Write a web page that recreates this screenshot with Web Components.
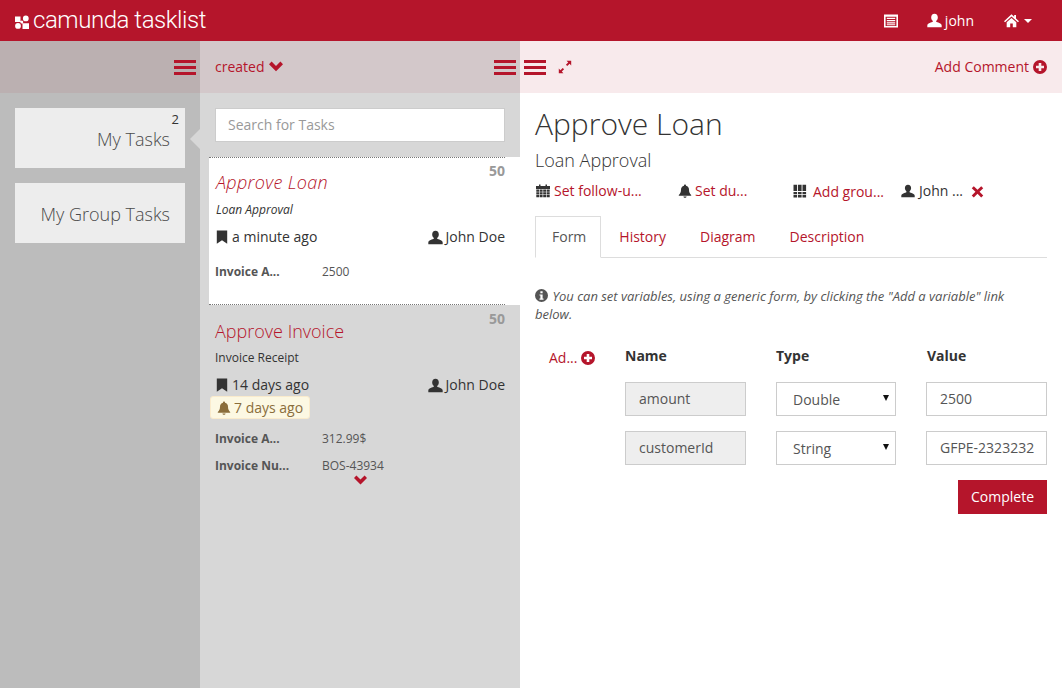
<!DOCTYPE html>
<html lang="en">
<head>
<meta charset="utf-8">
<title>camunda tasklist</title>
<style>
  html, body { margin: 0; height: 100%; overflow: hidden; }
  body { font: 14px/20px "Open Sans", "Liberation Sans", sans-serif; color: #333; }
</style>
</head>
<body>
<cam-app></cam-app>

<script>
const ICONS = {
  user: '<path d="M7 .8C5 .8 3.9 2.3 3.9 4.1c0 1.3.6 2.5 1.4 3.2.3.4.2 1-.3 1.2C3 9.2.3 9.9.3 11.6v1.6h13.4v-1.6c0-1.7-2.700-2.400-4.700-3.100-.5-.2-.6-.8-.3-1.200.8-.7 1.400-1.900 1.400-3.200C10.100 2.300 9 .8 7 .8z"/>',
  home: '<path d="M7 1.200 0 7.600l1 1L7 3.300l6 5.300 1-1-2.800-2.500V1.800H9.500v1.800zM2.500 8.700V13.300h3.300V9.800h2.400v3.500h3.300V8.700L7 4.700z"/>',
  listalt: '<path fill-rule="evenodd" d="M0 .5h14v13H0zM1.600 2.800v9.100h10.800V2.800zM2.800 3.800h8.400v1.200H2.800zM2.800 6h8.400v1.200H2.800zM2.800 8.200h8.400v1.200H2.800zM2.800 10.200h8.400v1H2.800z"/>',
  bookmark: '<path d="M1.800 .6h10.400v13.200L7 10.200l-5.200 3.600z"/>',
  bell: '<path d="M7 .4c-.6 0-1 .4-1 1v.4C4 2.300 3 3.800 3 5.800c0 2.600-.8 3.900-2.200 5.200v.8h12.400V11C11.800 9.700 11 8.400 11 5.800c0-2-1-3.500-3-4v-.4c0-.6-.4-1-1-1zM5.400 12.400C5.500 13.300 6.200 13.800 7 13.800s1.500-.5 1.600-1.400z"/>',
  calendar: '<path d="M3 .5h1.500V2h5V.5H11V2h3v3H0V2h3zM.3 5.600h2.900v2.100H.3zM3.800 5.600h2.800v2.100H3.800zM7.200 5.600H10v2.100H7.200zM10.600 5.600h3.100v2.100h-3.100zM.3 8.200h2.900v2.100H.3zM3.800 8.200h2.800v2.100H3.800zM7.200 8.200H10v2.100H7.200zM10.600 8.200h3.100v2.100h-3.100zM.3 10.800h2.900v2.400H.3zM3.800 10.800h2.800v2.400H3.800zM7.200 10.800H10v2.400H7.200zM10.600 10.800h3.100v2.400h-3.100z"/>',
  th: '<path d="M.5 .8h3.600v6.200H.5zM5 .8h3.600v6.200H5zM9.500 .8h3.600v6.200H9.500zM.5 7.900h3.600v2.300H.5zM5 7.900h3.600v2.300H5zM9.500 7.900h3.600v2.300H9.500zM.5 11h3.600v2.600H.5zM5 11h3.600v2.600H5zM9.500 11h3.600v2.600H9.500z"/>',
  remove: '<path d="M3 1.300 7 5.200l4-3.900L13.200 3.500 9.200 7.400l4 4L11 13.500l-4-4-4 4L.8 11.400l4-4-4-3.900z"/>',
  plus: '<path fill-rule="evenodd" d="M7 0a7 7 0 1 1 0 14A7 7 0 0 1 7 0zM5.700 3v2.700H3v2.600h2.700V11h2.600V8.300H11V5.700H8.300V3z"/>',
  info: '<path fill-rule="evenodd" d="M7 0a7 7 0 1 1 0 14A7 7 0 0 1 7 0zM5.800 2.400v2.200h2.400V2.400zM4.800 5.800v1.300h1v3H4.800v1.400h4.400v-1.400h-1V5.800z"/>',
  resize: '<path d="M8.600.8h4.600v4.600l-1.600-1.600-2.300 2.300-1.400-1.400 2.300-2.300zM5.400 13.200H.8V8.600l1.600 1.600 2.300-2.300 1.400 1.400-2.300 2.300z"/>',
  chevron: '<path d="M2.600 1.600 7 6l4.400-4.400L14 4.200l-7 7-7-7z"/>',
  logo: '<path d="M0 1.500h5.500V7H0zM10.800 .5a2.900 2.900 0 1 1 0 5.800 2.900 2.900 0 0 1 0-5.800zM6.800 5.600a1.500 1.500 0 1 1 0 3 1.500 1.500 0 0 1 0-3zM3 8a2.900 2.900 0 1 1 0 5.800A2.900 2.900 0 0 1 3 8zM7.500 8.300H14V14H7.500z"/>'
};

class CamIcon extends HTMLElement {
  connectedCallback() {
    if (this.shadowRoot) return;
    const size = this.getAttribute('size') || 14;
    this.attachShadow({ mode: 'open' }).innerHTML = `
      <style>
        :host { display: inline-flex; flex: none; width: ${size}px; height: ${size}px; }
        svg { display: block; width: 100%; height: 100%; fill: currentColor; }
      </style>
      <svg viewBox="0 0 14 14">${ICONS[this.getAttribute('name')] || ''}</svg>`;
  }
}

class CamMenuToggle extends HTMLElement {
  constructor() {
    super();
    this.attachShadow({ mode: 'open' }).innerHTML = `
      <style>
        :host { display: flex; flex-direction: column; gap: 3px; width: 22px; flex: none; }
        i { display: block; height: 3px; background: #b5152b; }
      </style>
      <i></i><i></i><i></i>`;
  }
}

class CamHeader extends HTMLElement {
  constructor() {
    super();
    this.attachShadow({ mode: 'open' }).innerHTML = `
      <style>
        :host { display: flex; align-items: center; height: 41px; background: #b5152b; color: #fff; }
        .brand { display: flex; align-items: center; margin-left: 15px; }
        .brand cam-icon { margin-top: 2px; }
        .name { margin-left: 4px; font: 300 24px/41px Roboto, "Open Sans", sans-serif; letter-spacing: -.45px; white-space: nowrap; }
        nav { margin-left: auto; display: flex; align-items: center; padding-right: 30px; }
        .item { display: flex; align-items: center; }
        .user { margin-left: 29px; gap: 3px; }
        .home { margin-left: 30px; }
        .caret { margin-left: 5px; width: 0; height: 0; border: 4px solid transparent; border-top-color: #fff; border-bottom: 0; }
      </style>
      <div class="brand">
        <cam-icon name="logo" size="14"></cam-icon>
        <span class="name">camunda tasklist</span>
      </div>
      <nav>
        <cam-icon class="item" name="listalt" size="14"></cam-icon>
        <span class="item user"><cam-icon name="user" size="15"></cam-icon>john</span>
        <span class="item home"><cam-icon name="home" size="15"></cam-icon><span class="caret"></span></span>
      </nav>`;
  }
}

class CamToolbar extends HTMLElement {
  constructor() {
    super();
    this.attachShadow({ mode: 'open' }).innerHTML = `
      <style>
        :host { display: flex; align-items: center; height: 52px; box-sizing: border-box; color: #b5152b; }
      </style>
      <slot></slot>`;
  }
}

class CamFilterCard extends HTMLElement {
  constructor() {
    super();
    this.attachShadow({ mode: 'open' }).innerHTML = `
      <style>
        :host { display: flex; align-items: center; justify-content: flex-end; position: relative; height: 60px;
          box-sizing: border-box; padding: 1px 15px 0; background: #ededed; color: #4a4a4a; font-size: 18px; font-weight: 300; }
        .count { position: absolute; top: 2px; right: 6px; font-size: 13px; font-weight: 400; line-height: 18px; color: #333; }
        .count:empty { display: none; }
      </style>
      <slot></slot><span class="count"></span>`;
  }
  connectedCallback() {
    this.shadowRoot.querySelector('.count').textContent = this.getAttribute('count') || '';
  }
}

class CamTaskCard extends HTMLElement {
  constructor() {
    super();
    this.attachShadow({ mode: 'open' }).innerHTML = `
      <style>
        :host { display: block; position: relative; }
        :host([active]) { background: #fff; }
        .inner { padding: 0 0 0 6px; margin-right: 15px; box-sizing: border-box; }
        :host([active]) .inner { border-top: 1px dotted #777; border-bottom: 1px dotted #777; padding-bottom: 14px; margin-top: -1px; }
        .prio { position: absolute; top: 4px; right: 15px; font-weight: 700; color: #999; line-height: 20px; }
        .title { padding-top: 13px; font-size: 18px; font-weight: 300; line-height: 26px; color: #b5152b; }
        .process { margin-top: 5px; font-size: 12px; line-height: 18px; }
        .dates { margin-top: 8px; display: flex; justify-content: space-between; }
        .dates span { display: flex; align-items: center; gap: 3px; }
        .vars { display: block; margin-top: 11px; }
        :host([active]) .title, :host([active]) .process { font-style: italic; }
        :host([active]) .title { padding-top: 11px; letter-spacing: .35px; padding-left: 1px; }
        :host([active]) .process { margin-top: 6px; padding-left: 1px; }
        :host([active]) .vars { margin-top: 16px; }
      </style>
      <span class="prio"></span>
      <div class="inner">
        <div class="title"></div>
        <div class="process"></div>
        <div class="dates">
          <span><cam-icon name="bookmark" size="14"></cam-icon><span class="created"></span></span>
          <span><cam-icon name="user" size="15"></cam-icon><span class="assignee"></span></span>
        </div>
        <slot name="due"></slot>
        <div class="vars"><slot></slot></div>
      </div>`;
  }
  connectedCallback() {
    for (const name of ['title', 'process', 'created', 'assignee']) {
      this.shadowRoot.querySelector('.' + name).textContent = this.getAttribute(name);
    }
    this.shadowRoot.querySelector('.prio').textContent = this.getAttribute('priority');
  }
}

class CamDueBadge extends HTMLElement {
  constructor() {
    super();
    this.attachShadow({ mode: 'open' }).innerHTML = `
      <style>
        :host { display: flex; align-items: center; gap: 3px; width: max-content; box-sizing: border-box; height: 23px; margin: 1px 0 0 -5px;
          padding: 0 6px; background: #fcf8e3; border: 1px solid #faebcc; border-radius: 3px; color: #8a6d3b; }
      </style>
      <cam-icon name="bell" size="14"></cam-icon><slot></slot>`;
  }
}

class CamTaskVar extends HTMLElement {
  constructor() {
    super();
    this.attachShadow({ mode: 'open' }).innerHTML = `
      <style>
        :host { display: grid; grid-template-columns: 107px 1fr; font-size: 12px; line-height: 18px; color: #555; margin-bottom: 9px; }
        b { font-weight: 700; }
      </style>
      <b></b><span><slot></slot></span>`;
  }
  connectedCallback() {
    this.shadowRoot.querySelector('b').textContent = this.getAttribute('label');
  }
}

class CamSearch extends HTMLElement {
  constructor() {
    super();
    this.attachShadow({ mode: 'open' }).innerHTML = `
      <style>
        :host { display: flex; align-items: center; height: 34px; box-sizing: border-box; padding: 0 12px; background: #fff; border: 1px solid #ccc; color: #999; }
      </style>
      <slot></slot>`;
  }
}

class CamTabs extends HTMLElement {
  constructor() {
    super();
    this.attachShadow({ mode: 'open' }).innerHTML = `
      <style>
        :host { display: flex; height: 42px; box-sizing: border-box; border-bottom: 1px solid #ddd; color: #b5152b; }
        span { box-sizing: border-box; height: 42px; padding: 11px 16px 0; margin-right: 2px; }
        .on { color: #555; background: #fff; border: 1px solid #ddd; border-bottom-color: #fff; padding: 10px 14px 0 16px; }
      </style>
      <span class="on">Form</span><span>History</span><span>Diagram</span><span>Description</span>`;
  }
}

class CamField extends HTMLElement {
  constructor() {
    super();
    this.attachShadow({ mode: 'open' }).innerHTML = `
      <style>
        :host { display: flex; align-items: center; justify-content: space-between; height: 34px; box-sizing: border-box;
          padding: 0 13px; background: #fff; border: 1px solid #ccc; color: #555; white-space: nowrap; }
        :host([readonly]) { background: #eee; }
        :host([select]) { padding: 2px 6px 0 16px; }
        .arrow { display: none; width: 0; height: 0; border: 3.500px solid transparent; border-top: 6px solid #111; border-bottom: 0; margin-top: -4px; }
        :host([select]) .arrow { display: block; }
      </style>
      <slot></slot><span class="arrow"></span>`;
  }
}

class CamVariableForm extends HTMLElement {
  constructor() {
    super();
    this.attachShadow({ mode: 'open' }).innerHTML = `
      <style>
        :host { display: grid; grid-template-columns: 60px 121px 120px 121px; column-gap: 30px; row-gap: 15px; margin-top: 23px; }
        .add { display: flex; align-items: center; gap: 4px; padding-left: 14px; color: #b5152b; white-space: nowrap; position: relative; }
        .add cam-icon { margin-top: 2px; }
        .add span { position: relative; top: 1px; }
        .head { font-weight: 700; margin-bottom: 1px; }
        .val { padding-left: 1px; }
        .blank { grid-column: 1; }
        button { grid-column: 1 / -1; justify-self: end; width: 89px; height: 34px; padding: 0; border: 0; background: #b5152b; color: #fff; font: inherit; }
      </style>
      <div class="add"><span>Ad...</span><cam-icon name="plus" size="14"></cam-icon></div>
      <div class="head">Name</div><div class="head">Type</div><div class="head val">Value</div>
      <div class="blank"></div>
      <cam-field readonly>amount</cam-field><cam-field select>Double</cam-field><cam-field>2500</cam-field>
      <div class="blank"></div>
      <cam-field readonly>customerId</cam-field><cam-field select>String</cam-field><cam-field>GFPE-2323232</cam-field>
      <button>Complete</button>`;
  }
}

class CamTaskDetail extends HTMLElement {
  constructor() {
    super();
    this.attachShadow({ mode: 'open' }).innerHTML = `
      <style>
        :host { display: block; padding: 0 15px; }
        h1 { margin: 11px 0 0; font-size: 30px; font-weight: 300; line-height: 40px; color: #333; }
        h2 { margin: 4px 0 0; font-size: 18px; font-weight: 300; line-height: 24px; color: #333; }
        .meta { display: flex; align-items: center; margin-top: 9px; height: 20px; white-space: nowrap; color: #b5152b; }
        .meta > span { display: flex; align-items: center; gap: 4px; }
        .meta cam-icon { color: #333; }
        .follow { width: 143px; padding-left: 1px; box-sizing: border-box; }
        .due { width: 115px; gap: 3px !important; }
        .group { width: 108px; gap: 6px !important; }
        .group span { position: relative; top: 1px; }
        .assignee { color: #333; width: 70px; }
        .meta cam-icon.x { color: #b5152b; width: 13px; }
        cam-tabs { margin-top: 15px; }
        .info { margin: 29px 30px 0 0; font-size: 13px; line-height: 18px; font-style: italic; color: #555; }
        .info cam-icon { vertical-align: -1px; margin-right: 1px; }
      </style>
      <h1>Approve Loan</h1>
      <h2>Loan Approval</h2>
      <div class="meta">
        <span class="follow"><cam-icon name="calendar" size="14"></cam-icon>Set follow-u...</span>
        <span class="due"><cam-icon name="bell" size="14"></cam-icon>Set du...</span>
        <span class="group"><cam-icon name="th" size="14"></cam-icon><span>Add grou...</span></span>
        <span class="assignee"><cam-icon name="user" size="14"></cam-icon>John ...</span>
        <cam-icon class="x" name="remove" size="13"></cam-icon>
      </div>
      <cam-tabs></cam-tabs>
      <p class="info"><cam-icon name="info" size="13"></cam-icon> You can set variables, using a generic form, by clicking the "Add a variable" link below.</p>
      <cam-variable-form></cam-variable-form>`;
  }
}

class CamApp extends HTMLElement {
  constructor() {
    super();
    this.attachShadow({ mode: 'open' }).innerHTML = `
      <style>
        :host { display: flex; flex-direction: column; height: 100vh; }
        .columns { flex: 1; display: grid; grid-template-columns: 200px 320px 1fr; min-height: 0; }
        .col { min-width: 0; position: relative; }
        .filters { background: #bcbcbc; }
        .tasks { background: #d7d7d7; }
        .detail { background: #fff; }
        .filters cam-toolbar { background: #bbb0b1; justify-content: flex-end; padding-right: 4px; }
        .tasks cam-toolbar { background: #d3c8ca; padding: 0 4px 0 15px; }
        .detail cam-toolbar { background: #f8eaec; padding: 0 15px 0 4px; }
        .sort { display: flex; align-items: center; gap: 4px; }
        .tasks cam-menu-toggle { margin-left: auto; }
        .detail cam-menu-toggle { margin-right: 12px; }
        .comment { margin-left: auto; display: flex; align-items: center; gap: 4px; }
        .filter-list { display: flex; flex-direction: column; gap: 15px; padding: 15px 15px 0; }
        .arrow { position: absolute; left: -10px; top: 88px; width: 0; height: 0; border: 10px solid transparent; border-left: 0; border-right-color: #d7d7d7; }
        cam-search { margin: 15px 15px 16px; }
        .list { margin-left: 9px; }
        .more { display: block; margin: -10px 0 0 139px; color: #b5152b; }
      </style>
      <cam-header></cam-header>
      <div class="columns">
        <section class="col filters">
          <cam-toolbar><cam-menu-toggle></cam-menu-toggle></cam-toolbar>
          <div class="filter-list">
            <cam-filter-card count="2">My Tasks</cam-filter-card>
            <cam-filter-card>My Group Tasks</cam-filter-card>
          </div>
        </section>
        <section class="col tasks">
          <span class="arrow"></span>
          <cam-toolbar>
            <span class="sort">created <cam-icon name="chevron" size="14"></cam-icon></span>
            <cam-menu-toggle></cam-menu-toggle>
          </cam-toolbar>
          <cam-search>Search for Tasks</cam-search>
          <div class="list">
            <cam-task-card active title="Approve Loan" process="Loan Approval" created="a minute ago" assignee="John Doe" priority="50">
              <cam-task-var label="Invoice A...">2500</cam-task-var>
            </cam-task-card>
            <cam-task-card due title="Approve Invoice" process="Invoice Receipt" created="14 days ago" assignee="John Doe" priority="50">
              <cam-due-badge slot="due">7 days ago</cam-due-badge>
              <cam-task-var label="Invoice A...">312.99$</cam-task-var>
              <cam-task-var label="Invoice Nu...">BOS-43934</cam-task-var>
              <cam-icon class="more" name="chevron" size="13"></cam-icon>
            </cam-task-card>
          </div>
        </section>
        <section class="col detail">
          <cam-toolbar>
            <cam-menu-toggle></cam-menu-toggle>
            <cam-icon name="resize" size="14"></cam-icon>
            <span class="comment">Add Comment <cam-icon name="plus" size="14"></cam-icon></span>
          </cam-toolbar>
          <cam-task-detail></cam-task-detail>
        </section>
      </div>`;
  }
}

customElements.define('cam-icon', CamIcon);
customElements.define('cam-menu-toggle', CamMenuToggle);
customElements.define('cam-header', CamHeader);
customElements.define('cam-toolbar', CamToolbar);
customElements.define('cam-filter-card', CamFilterCard);
customElements.define('cam-task-card', CamTaskCard);
customElements.define('cam-due-badge', CamDueBadge);
customElements.define('cam-task-var', CamTaskVar);
customElements.define('cam-search', CamSearch);
customElements.define('cam-tabs', CamTabs);
customElements.define('cam-field', CamField);
customElements.define('cam-variable-form', CamVariableForm);
customElements.define('cam-task-detail', CamTaskDetail);
customElements.define('cam-app', CamApp);
</script>
</body>
</html>
